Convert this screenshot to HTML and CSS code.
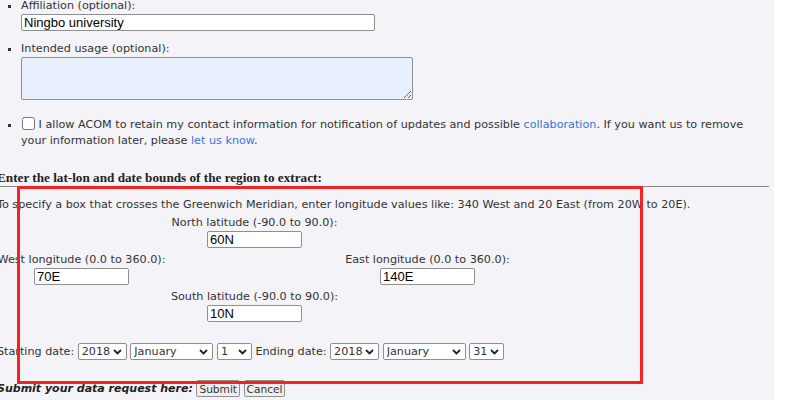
FILE: index.html
```html
<!DOCTYPE html>
<html lang="en">
<head>
    <meta charset="UTF-8">
    <title>Data extraction request</title>
    <link rel="stylesheet" href="styles.css">
</head>
<body>
    <div class="page">
        <ul class="fields">
            <li>
                <label for="affil">Affiliation (optional):</label>
                <input type="text" id="affil" class="text-wide" value="Ningbo university">
            </li>
            <li>
                <label for="usage">Intended usage (optional):</label>
                <textarea id="usage" class="usage"></textarea>
            </li>
            <li class="consent">
                <input type="checkbox" class="check"> I allow ACOM to retain my contact information for notification of updates and possible <a href="#">collaboration</a>. If you want us to remove your information later, please <a href="#">let us know</a>.
            </li>
        </ul>

        <h3 class="section">Enter the lat-lon and date bounds of the region to extract:</h3>
        <p class="hint">To specify a box that crosses the Greenwich Meridian, enter longitude values like: 340 West and 20 East (from 20W to 20E).</p>

        <div class="bounds">
            <div class="cell north">
                <div>North latitude (-90.0 to 90.0):</div>
                <input type="text" class="coord" value="60N">
            </div>
            <div class="cell west">
                <div>West longitude (0.0 to 360.0):</div>
                <input type="text" class="coord" value="70E">
            </div>
            <div class="cell east">
                <div>East longitude (0.0 to 360.0):</div>
                <input type="text" class="coord" value="140E">
            </div>
            <div class="cell south">
                <div>South latitude (-90.0 to 90.0):</div>
                <input type="text" class="coord" value="10N">
            </div>
        </div>

        <div class="dates">
            Starting date:
            <span class="pick"><select class="sel-year"><option>2018</option></select><svg class="chev" viewBox="0 0 9 6"><path d="M1 1l3.5 3.5L8 1"/></svg></span>
            <span class="pick"><select class="sel-month"><option>January</option></select><svg class="chev" viewBox="0 0 9 6"><path d="M1 1l3.5 3.5L8 1"/></svg></span>
            <span class="pick"><select class="sel-day"><option>1</option></select><svg class="chev" viewBox="0 0 9 6"><path d="M1 1l3.5 3.5L8 1"/></svg></span>
            Ending date:
            <span class="pick"><select class="sel-year"><option>2018</option></select><svg class="chev" viewBox="0 0 9 6"><path d="M1 1l3.5 3.5L8 1"/></svg></span>
            <span class="pick"><select class="sel-month"><option>January</option></select><svg class="chev" viewBox="0 0 9 6"><path d="M1 1l3.5 3.5L8 1"/></svg></span>
            <span class="pick"><select class="sel-day"><option>31</option></select><svg class="chev" viewBox="0 0 9 6"><path d="M1 1l3.5 3.5L8 1"/></svg></span>
        </div>

        <div class="submit-row">
            <em>Submit your data request here:</em>
            <button type="submit" class="btn">Submit</button>
            <button type="reset" class="btn">Cancel</button>
        </div>
    </div>

    <div class="highlight"></div>
</body>
</html>
```

FILE: styles.css
```css
body {
    margin: 0;
    background: #ffffff;
    font-family: "DejaVu Sans", Verdana, sans-serif;
    font-size: 11.2px;
    line-height: 16px;
    color: #333333;
    overflow: hidden;
}

a {
    color: #3b73d9;
    text-decoration: none;
}

.page {
    width: 772px;
    margin: -2px 0 0 -3px;
    padding: 0 5px 40px 0;
    background: #f3f3f8;
}

.fields {
    margin: 0;
    padding: 0 18px 0 24px;
    list-style: square;
}

.fields li + li {
    margin-top: 10px;
}

.fields label {
    display: block;
}

.text-wide {
    display: block;
    box-sizing: border-box;
    width: 354px;
    height: 17px;
    margin: 0;
    padding: 0 2px;
    font-family: "Liberation Sans", Arial, sans-serif;
    font-size: 13px;
    border: 1px solid #8f8f8f;
    border-radius: 2px;
    background: #ffffff;
}

.usage {
    display: block;
    box-sizing: border-box;
    width: 392px;
    height: 43px;
    margin: 0;
    border: 1px solid #8f8f8f;
    border-radius: 2px;
    background: #e8f0fe;
}

.fields li.consent {
    margin-top: 17px;
}

.check {
    width: 13px;
    height: 13px;
    margin: 0 0 0 1px;
    vertical-align: -2px;
}

.section {
    margin: 21px 0 0;
    font-family: "Liberation Serif", "Times New Roman", serif;
    font-size: 13.2px;
    line-height: 16px;
    font-weight: bold;
    color: #222222;
    border-bottom: 1px solid #8a8a8a;
}

.hint {
    margin: 10px 0 0;
}

.bounds {
    display: grid;
    grid-template-columns: 173px 173px 173px;
    row-gap: 3px;
    margin: 2px 0 0 -2px;
    text-align: center;
    white-space: nowrap;
}

.north { grid-column: 2; grid-row: 1; }
.west { grid-column: 1; grid-row: 2; }
.east { grid-column: 3; grid-row: 2; }
.south { grid-column: 2; grid-row: 3; }

.coord {
    box-sizing: border-box;
    width: 95px;
    height: 17px;
    margin: 0;
    padding: 0 2px;
    font-family: "Liberation Sans", Arial, sans-serif;
    font-size: 13px;
    border: 1px solid #8f8f8f;
    border-radius: 2px;
    background: #ffffff;
}

.dates {
    margin-top: 20px;
    line-height: 17px;
    white-space: nowrap;
}

.pick {
    position: relative;
    display: inline-block;
    vertical-align: top;
}

.pick select {
    display: block;
    box-sizing: border-box;
    height: 17px;
    padding: 0 0 0 3px;
    font-family: "DejaVu Sans", Verdana, sans-serif;
    font-size: 11.2px;
    color: #333333;
    border: 1px solid #8f8f8f;
    border-radius: 2px;
    background: #ffffff;
    appearance: none;
    -webkit-appearance: none;
}

.chev {
    position: absolute;
    right: 5px;
    top: 6px;
    width: 9px;
    height: 6px;
    pointer-events: none;
    fill: none;
    stroke: #222222;
    stroke-width: 1.8;
}

.sel-year { width: 49px; }
.sel-month { width: 83px; }
.sel-day { width: 35px; }

.submit-row {
    margin-top: 20px;
    line-height: 17px;
    white-space: nowrap;
}

.submit-row em {
    font-size: 11px;
    font-weight: bold;
    color: #222222;
}

.btn {
    box-sizing: border-box;
    height: 17px;
    padding: 0 2px;
    font-family: "DejaVu Sans", Verdana, sans-serif;
    font-size: 10.6px;
    color: #333333;
    background: #efefef;
    border: 1px solid #8f8f8f;
    border-radius: 2px;
    vertical-align: top;
}

.highlight {
    position: absolute;
    left: 17px;
    top: 186px;
    width: 626px;
    height: 198px;
    box-sizing: border-box;
    border: 3px solid #f52222;
}
```
